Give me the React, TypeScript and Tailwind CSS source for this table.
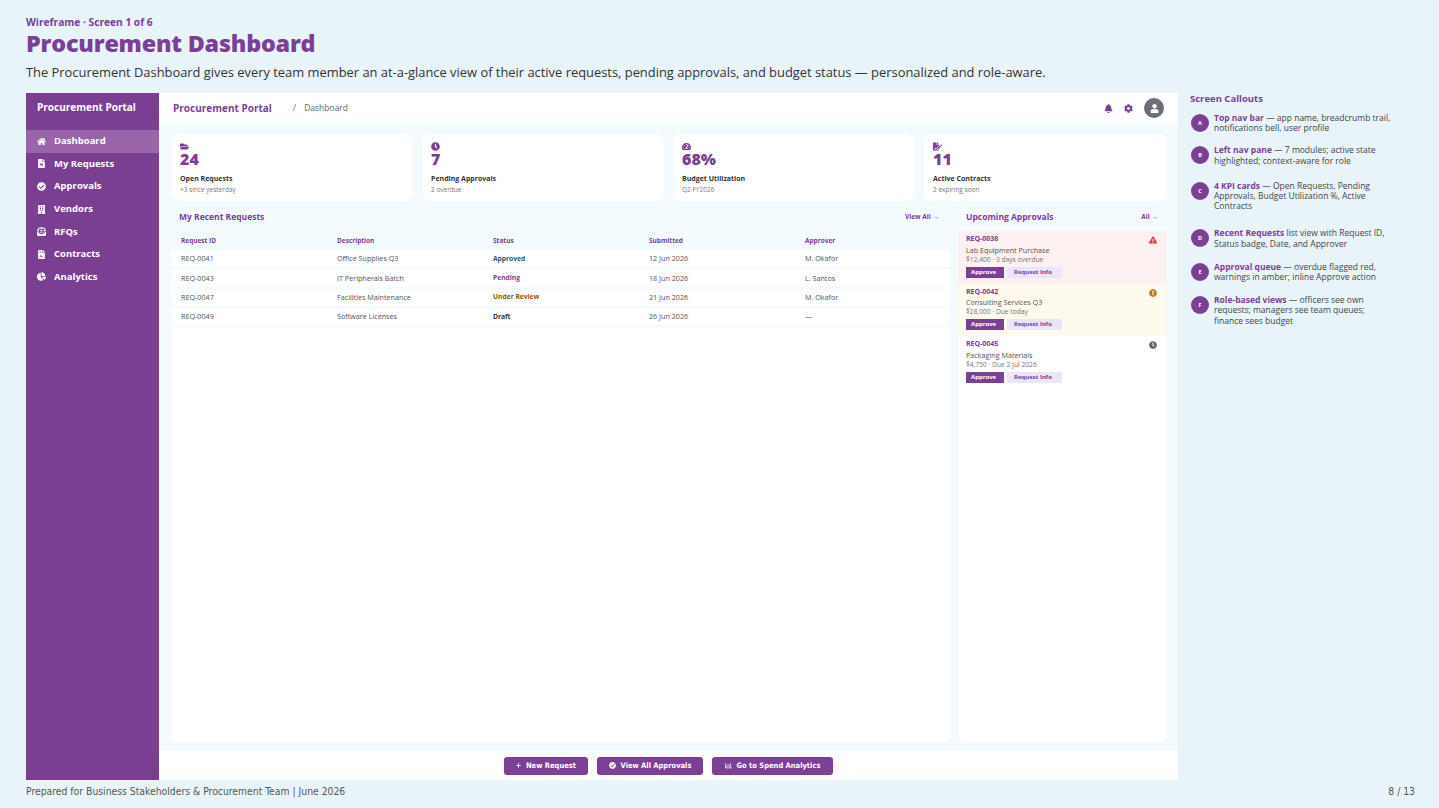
import {
  FaHome,
  FaFileAlt,
  FaCheckCircle,
  FaBuilding,
  FaEnvelopeOpenText,
  FaFileContract,
  FaChartPie,
  FaBell,
  FaCog,
  FaUser,
  FaFolderOpen,
  FaClock,
  FaTachometerAlt,
  FaFileSignature,
  FaExclamationTriangle,
  FaExclamationCircle,
  FaPlus,
  FaRegChartBar,
} from "react-icons/fa";

const navItems = [
  { label: "Dashboard", icon: FaHome, active: true },
  { label: "My Requests", icon: FaFileAlt },
  { label: "Approvals", icon: FaCheckCircle },
  { label: "Vendors", icon: FaBuilding },
  { label: "RFQs", icon: FaEnvelopeOpenText },
  { label: "Contracts", icon: FaFileContract },
  { label: "Analytics", icon: FaChartPie },
];

const kpis = [
  { icon: FaFolderOpen, value: "24", label: "Open Requests", sub: "+3 since yesterday" },
  { icon: FaClock, value: "7", label: "Pending Approvals", sub: "2 overdue" },
  { icon: FaTachometerAlt, value: "68%", label: "Budget Utilization", sub: "Q2 FY2026" },
  { icon: FaFileSignature, value: "11", label: "Active Contracts", sub: "2 expiring soon" },
];

const requests = [
  { id: "REQ-0041", desc: "Office Supplies Q3", status: "Approved", statusClass: "text-[#1f5a78]", date: "12 Jun 2026", approver: "M. Okafor" },
  { id: "REQ-0043", desc: "IT Peripherals Batch", status: "Pending", statusClass: "text-[#7b3f94]", date: "18 Jun 2026", approver: "L. Santos" },
  { id: "REQ-0047", desc: "Facilities Maintenance", status: "Under Review", statusClass: "text-[#8a5a00]", date: "21 Jun 2026", approver: "M. Okafor" },
  { id: "REQ-0049", desc: "Software Licenses", status: "Draft", statusClass: "text-[#333333]", date: "26 Jun 2026", approver: "—" },
];

const approvals = [
  { id: "REQ-0038", title: "Lab Equipment Purchase", meta: "$12,400 · 3 days overdue", bg: "bg-[#fdf0f1]", kind: "overdue" },
  { id: "REQ-0042", title: "Consulting Services Q3", meta: "$28,000 · Due today", bg: "bg-[#fffaed]", kind: "warn" },
  { id: "REQ-0045", title: "Packaging Materials", meta: "$4,750 · Due 2 Jul 2026", bg: "bg-white", kind: "normal" },
];

const callouts = [
  { letter: "A", bold: "Top nav bar", text: " — app name, breadcrumb trail, notifications bell, user profile", mb: "mb-[12px]" },
  { letter: "B", bold: "Left nav pane", text: " — 7 modules; active state highlighted; context-aware for role", mb: "mb-[15px]" },
  { letter: "C", bold: "4 KPI cards", text: " — Open Requests, Pending Approvals, Budget Utilization %, Active Contracts", mb: "mb-[17px]" },
  { letter: "D", bold: "Recent Requests", text: " list view with Request ID, Status badge, Date, and Approver", mb: "mb-[13px]" },
  { letter: "E", bold: "Approval queue", text: " — overdue flagged red, warnings in amber; inline Approve action", mb: "mb-[13px]" },
  { letter: "F", bold: "Role-based views", text: " — officers see own requests; managers see team queues; finance sees budget", mb: "" },
];

function ApprovalIcon({ kind }: { kind: string }) {
  if (kind === "overdue") return <FaExclamationTriangle className="w-[8px] h-[8px] text-[#d63a3a]" />;
  if (kind === "warn") return <FaExclamationCircle className="w-[8px] h-[8px] text-[#c5761c]" />;
  return <FaClock className="w-[8px] h-[8px] text-[#666666]" />;
}

export default function App() {
  return (
    <div className="w-[1439px] h-[808px] overflow-hidden bg-[#e9f4f9] font-['Open_Sans',sans-serif] text-[#333333] flex flex-col">
      {/* Title block */}
      <div className="px-[26px] pt-[16px]">
        <div className="text-[10.2px] leading-[13px] font-bold text-[#7b3f94]">Wireframe · Screen 1 of 6</div>
        <h1 className="text-[23.3px] leading-[29px] font-extrabold text-[#7b3f94] tracking-[-0.2px]">Procurement Dashboard</h1>
        <p className="mt-[6px] text-[12.9px] leading-[16px] text-[#333333]">
          The Procurement Dashboard gives every team member an at-a-glance view of their active requests, pending approvals, and budget status — personalized and role-aware.
        </p>
      </div>

      {/* Body */}
      <div className="flex mt-[13px] pl-[26px]">
        {/* Wireframe frame */}
        <div className="w-[1152px] h-[687px] flex">
          {/* Sidebar */}
          <aside className="w-[133px] bg-[#7b3f91] flex flex-col">
            <div className="h-[37px] px-[11px] pt-[7px] text-[10px] leading-[14px] font-bold text-white">Procurement Portal</div>
            {navItems.map((item) => {
              const Icon = item.icon;
              return (
                <div
                  key={item.label}
                  className={`h-[22.6px] px-[11px] flex items-center gap-[8px] text-[9.5px] font-bold text-white ${item.active ? "bg-[#9a64a9]" : ""}`}
                >
                  <Icon className="w-[9px] h-[9px]" />
                  <span>{item.label}</span>
                </div>
              );
            })}
          </aside>

          {/* Main */}
          <main className="flex-1 flex flex-col bg-[#f3fbfe]">
            {/* Top nav */}
            <div className="h-[30px] bg-white px-[14px] flex items-center">
              <span className="text-[10px] font-bold text-[#7b3f94]">Procurement Portal</span>
              <span className="ml-[21px] text-[9px] text-[#777777]">/</span>
              <span className="ml-[8px] text-[8.5px] text-[#666666]">Dashboard</span>
              <div className="ml-auto flex items-center gap-[11px]">
                <FaBell className="w-[9px] h-[9px] text-[#7b3f94]" />
                <FaCog className="w-[9px] h-[9px] text-[#7b3f94]" />
                <div className="w-[20px] h-[20px] rounded-full bg-[#6e6e7a] flex items-center justify-center">
                  <FaUser className="w-[9px] h-[9px] text-white" />
                </div>
              </div>
            </div>

            {/* Content */}
            <div className="flex-1 flex flex-col px-[12px] pt-[11px] pb-[9px]">
              {/* KPI cards */}
              <div className="grid grid-cols-4 gap-[9px]">
                {kpis.map((k) => {
                  const Icon = k.icon;
                  return (
                    <div key={k.label} className="h-[67px] bg-white rounded-[8px] px-[9px] pt-[8px]">
                      <Icon className="w-[9px] h-[9px] text-[#7b3f94]" />
                      <div className="text-[16px] leading-[17px] font-extrabold text-[#7b3f94]">{k.value}</div>
                      <div className="mt-[5px] text-[7px] leading-[11px] font-bold text-[#333333]">{k.label}</div>
                      <div className="text-[6.5px] leading-[11px] text-[#777777]">{k.sub}</div>
                    </div>
                  );
                })}
              </div>

              {/* Lower section */}
              <div className="flex-1 flex gap-[8px] mt-[6px]">
                {/* Recent requests */}
                <div className="w-[779px] flex flex-col bg-white rounded-[8px] overflow-hidden">
                  <div className="h-[24px] bg-[#f3fbfe] px-[8px] pt-[4px] flex items-start justify-between">
                    <span className="text-[8.5px] leading-[12px] font-bold text-[#7b3f94]">My Recent Requests</span>
                    <span className="text-[6.5px] leading-[12px] font-bold text-[#7b3f94] mr-[3px]">View All →</span>
                  </div>
                  <div className="h-[19px] bg-[#f3fbfe] px-[10px] grid grid-cols-[156px_156px_156px_156px_1fr] items-center text-[6.5px] font-bold text-[#7b3f94]">
                    <span>Request ID</span>
                    <span>Description</span>
                    <span>Status</span>
                    <span>Submitted</span>
                    <span>Approver</span>
                  </div>
                  {requests.map((r) => (
                    <div
                      key={r.id}
                      className="h-[19.3px] px-[10px] grid grid-cols-[156px_156px_156px_156px_1fr] items-center text-[7.2px] text-[#555555] border-b-2 border-[#f3fbfe]"
                    >
                      <span>{r.id}</span>
                      <span>{r.desc}</span>
                      <span className={`font-bold text-[6.7px] ${r.statusClass}`}>{r.status}</span>
                      <span>{r.date}</span>
                      <span>{r.approver}</span>
                    </div>
                  ))}
                  <div className="flex-1 bg-white" />
                </div>

                {/* Upcoming approvals */}
                <div className="flex-1 flex flex-col bg-white rounded-[8px] overflow-hidden">
                  <div className="h-[24px] bg-[#f3fbfe] px-[8px] pt-[4px] flex items-start justify-between">
                    <span className="text-[8.5px] leading-[12px] font-bold text-[#7b3f94]">Upcoming Approvals</span>
                    <span className="text-[6.5px] leading-[12px] font-bold text-[#7b3f94]">All →</span>
                  </div>
                  {approvals.map((a) => (
                    <div key={a.id} className={`h-[52.5px] px-[8px] pt-[3px] ${a.bg}`}>
                      <div className="flex items-start justify-between">
                        <span className="text-[7px] leading-[10.5px] font-bold text-[#7b3f94]">{a.id}</span>
                        <span className="pt-[2px] pr-[1px]"><ApprovalIcon kind={a.kind} /></span>
                      </div>
                      <div className="text-[7.2px] leading-[10px] text-[#555555]">{a.title}</div>
                      <div className="text-[6.7px] leading-[10px] text-[#777777]">{a.meta}</div>
                      <div className="mt-[2px] flex gap-[3px]">
                        <span className="h-[11px] w-[38px] px-[5px] bg-[#7b3f94] text-white text-[6px] font-bold flex items-center">Approve</span>
                        <span className="h-[11px] w-[55px] px-[7px] bg-[#e8e6f8] text-[#7b3f94] text-[6px] font-bold flex items-center">Request Info</span>
                      </div>
                    </div>
                  ))}
                  <div className="flex-1 bg-white" />
                </div>
              </div>
            </div>

            {/* Bottom action bar */}
            <div className="h-[29px] bg-white flex items-center justify-center gap-[9px] font-['Liberation_Sans_Narrow','DejaVu_Sans_Condensed',sans-serif]">
              <button className="h-[18px] w-[84px] rounded-[3px] bg-[#7b3f94] text-white text-[7.5px] font-bold flex items-center justify-center gap-[5px]">
                <FaPlus className="w-[5px] h-[5px]" />
                New Request
              </button>
              <button className="h-[18px] w-[106px] rounded-[3px] bg-[#7b3f94] text-white text-[7.5px] font-bold flex items-center justify-center gap-[5px]">
                <FaCheckCircle className="w-[7px] h-[7px]" />
                View All Approvals
              </button>
              <button className="h-[18px] w-[121px] rounded-[3px] bg-[#7b3f94] text-white text-[7.5px] font-bold flex items-center justify-center gap-[5px]">
                <FaRegChartBar className="w-[7px] h-[7px]" />
                Go to Spend Analytics
              </button>
            </div>
          </main>
        </div>

        {/* Callouts */}
        <div className="ml-[12px] w-[230px]">
          <div className="text-[9.5px] leading-[12px] font-bold text-[#7b3f94]">Screen Callouts</div>
          <div className="mt-[8px] pl-[1px]">
            {callouts.map((c) => (
              <div key={c.letter} className={`flex gap-[5px] ${c.mb}`}>
                <div className="w-[18px] h-[18px] shrink-0 rounded-full bg-[#7b3f94] text-white text-[5.5px] font-bold flex items-center justify-center mt-[1px]">
                  {c.letter}
                </div>
                <p className="w-[179px] text-[8.5px] leading-[10.2px] text-[#444444]">
                  <span className="font-bold text-[#7b3f94]">{c.bold}</span>
                  {c.text}
                </p>
              </div>
            ))}
          </div>
        </div>
      </div>

      {/* Footer */}
      <div className="flex items-center justify-between px-[26px] mt-[4px] font-['Liberation_Sans_Narrow','DejaVu_Sans_Condensed',sans-serif] text-[10.3px] text-[#555555]">
        <span>Prepared for Business Stakeholders &amp; Procurement Team | June 2026</span>
        <span className="mr-[-2px]">8 / 13</span>
      </div>
    </div>
  );
}
